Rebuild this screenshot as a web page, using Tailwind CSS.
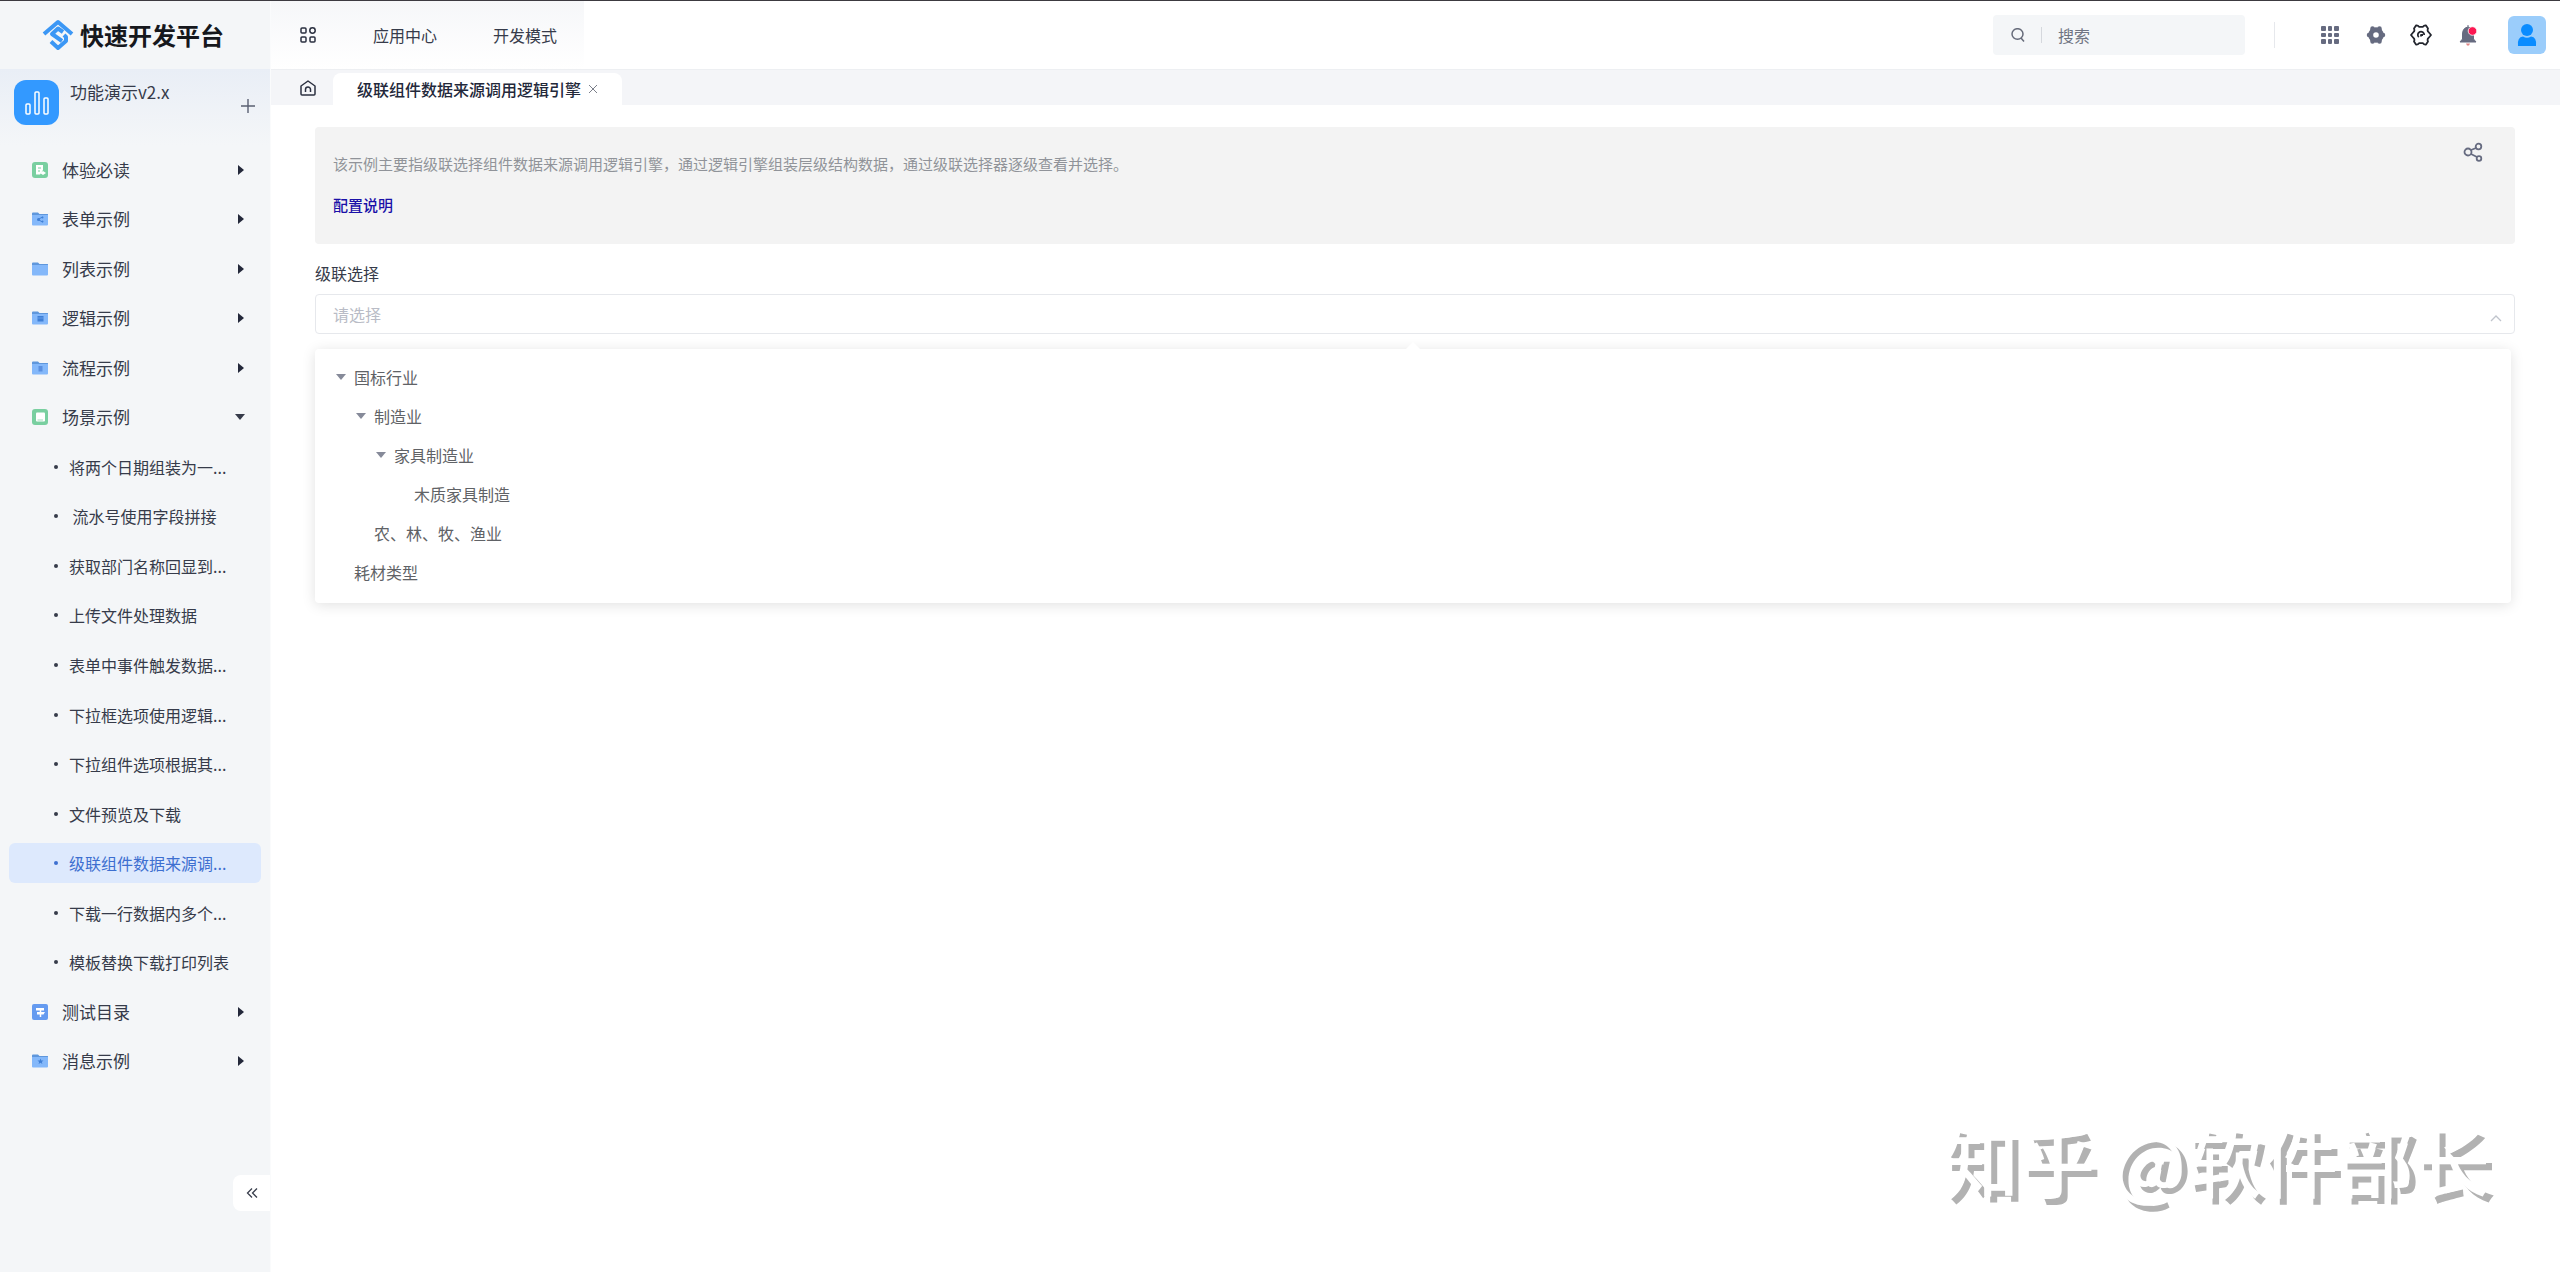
<!DOCTYPE html>
<html lang="zh-CN">

<head>
    <meta charset="UTF-8" />
    <meta name="viewport" content="width=device-width, initial-scale=1.0" />
    <title>快速开发平台</title>
    <script src="https://cdn.jsdelivr.net/npm/@tailwindcss/browser@4"></script>
</head>

<body class="min-h-screen flex flex-col bg-white border-t border-[#3c3a40] text-base text-[#363b4a] font-['Noto_Sans_CJK_SC',sans-serif]">

    <!-- Icônes réutilisées -->
    <svg class="hidden">
        <symbol id="folder" viewBox="0 0 16 14">
            <path d="M0 1.5Q0 .5 1 .5H6L7.5 2H16V4H0Z" fill="#5f97dc" />
            <path d="M0 3H15.5L16 2.5V12.5Q16 13.5 15 13.5H1Q0 13.5 0 12.5Z" fill="#84b8fa" />
        </symbol>
        <symbol id="right" viewBox="0 0 8 12"><path d="M1 1L7 6L1 11Z" fill="#23283a" /></symbol>
        <symbol id="down" viewBox="0 0 10 6"><path d="M0 0H10L5 6Z" fill="currentColor" /></symbol>
    </svg>

    <div class="flex flex-1">
        <aside class="w-[270px] shrink-0 flex flex-col bg-[#f4f6f8] relative">
            <div class="h-17 flex items-center pl-[42px] gap-[6px]">
                <svg class="w-8 h-8" viewBox="0 0 32 32" fill="none" stroke="#3b97f5" stroke-width="4" stroke-linejoin="round">
                    <path d="M2 15L16 3L30 15" />
                    <path d="M21 13L16 9.500L10 15L20 22" />
                    <path d="M22 16L24 18V22L16 29L9 22.500" />
                </svg>
                <span class="text-2xl leading-8 font-bold text-[#16181d] whitespace-nowrap">快速开发平台</span>
            </div>
            <div class="h-[76px] flex pt-[11px] pl-[14px] pr-[15px] bg-linear-to-b from-[#e9eef6] to-[#f4f6f8]">
                <div class="w-[45px] h-[45px] rounded-xl bg-[#3399ff] flex items-center justify-center">
                    <svg class="w-6 h-6" viewBox="0 0 24 24" fill="none" stroke="white" stroke-width="1.5">
                        <rect x="1" y="13" width="4" height="10" rx="1" />
                        <rect x="10" y="1" width="4" height="22" rx="1" />
                        <rect x="19" y="7" width="4" height="16" rx="1" />
                    </svg>
                </div>
                <span class="flex-1 ml-[11px] text-[17px] leading-6">功能演示v2.x</span>
                <button class="self-start mt-[19px]" aria-label="新增">
                    <svg class="w-[14px] h-[14px]" viewBox="0 0 14 14" stroke="#5a6072" stroke-width="1.4"><path d="M7 0V14M0 7H14" /></svg>
                </button>
            </div>

            <nav id="menu" class="h-[941px] grid auto-rows-fr items-center px-[9px]"></nav>

            <button class="absolute right-0 bottom-[61px] w-[37px] h-9 rounded-l-lg bg-white flex items-center justify-center" aria-label="收起">
                <svg class="w-3 h-3" viewBox="0 0 12 12" fill="none" stroke="#3a3f4d" stroke-width="1.3"><path d="M6 1.5L1.5 6L6 10.5M11 1.5L6.500 6L11 10.5" /></svg>
            </button>
        </aside>

        <div class="flex-1 flex flex-col border-l border-[#fafbfc]">
            <header class="h-17 flex items-center">
                <div class="h-full w-[313px] flex items-center pl-[29px] bg-linear-to-b from-[#f6f7f9] to-white">
                    <svg class="w-4 h-4" viewBox="0 0 16 16" fill="none" stroke="#2b3040" stroke-width="1.5">
                        <rect x="1" y="1" width="5" height="5" rx="1" />
                        <circle cx="12.500" cy="3.500" r="2.700" />
                        <rect x="1" y="10" width="5" height="5" rx="1" />
                        <rect x="10" y="10" width="5" height="5" rx="1" />
                    </svg>
                    <a href="#" class="ml-[57px]">应用中心</a>
                    <a href="#" class="ml-14">开发模式</a>
                </div>
                <div class="flex-1"></div>
                <label class="w-[252px] h-10 rounded bg-[#f4f6f8] flex items-center pl-[18px]">
                    <svg class="w-[14px] h-[14px]" viewBox="0 0 14 14" fill="none" stroke="#666b7a" stroke-width="1.5"><ellipse cx="6.500" cy="6" rx="5.500" ry="5.300" /><path d="M10 10L13 13.500" /></svg>
                    <span class="w-px h-4 ml-4 bg-[#d5d8dd]"></span>
                    <input type="text" placeholder="搜索" aria-label="搜索" class="w-40 ml-4 bg-transparent outline-none placeholder-[#6f7482]" />
                </label>
                <span class="w-px h-[26px] ml-[29px] bg-[#e6e8ec]"></span>
                <div class="flex items-center ml-[45px]">
                    <button aria-label="应用">
                        <svg class="w-5 h-5" viewBox="0 0 20 20" fill="#666b80">
                            <rect x="1" y="1" width="5" height="5" rx="1" /><rect x="8" y="1" width="4" height="5" rx="1" /><rect x="14" y="1" width="5" height="5" rx="1" />
                            <rect x="1" y="8" width="5" height="4" rx="1" /><rect x="8" y="8" width="4" height="4" rx="1" /><rect x="14" y="8" width="5" height="4" rx="1" />
                            <rect x="1" y="14" width="5" height="5" rx="1" /><rect x="8" y="14" width="4" height="5" rx="1" /><rect x="14" y="14" width="5" height="5" rx="1" />
                        </svg>
                    </button>
                    <button class="ml-[26px]" aria-label="设置">
                        <svg class="w-5 h-5" viewBox="0 0 20 20" fill="none" stroke="#666b80" stroke-linecap="round">
                            <circle cx="10" cy="10" r="5.300" stroke-width="5" />
                            <path d="M6.500 3.500V5M13.500 3.500V5M6.500 16.500V15M13.500 16.500V15M3 10H4M17 10H16" stroke-width="4.500" />
                        </svg>
                    </button>
                    <button class="ml-6" aria-label="系统">
                        <svg class="w-[22px] h-[22px]" viewBox="0 0 22 22" fill="none" stroke="#23262e" stroke-width="1.8" stroke-linejoin="round">
                            <path d="M6 1.500Q8 1.200 9 2.800H13Q14 1.200 16 1.500L18 4.500Q17 7 18.500 8L21 11L18.500 14Q17 15 18 17.500L16 20.500Q14 20.800 13 19.200H9Q8 20.800 6 20.500L4 17.500Q5 15 3.500 14L1 11L3.500 8Q5 7 4 4.500Z" />
                            <path d="M8.800 13.200A3.200 3.200 0 1 1 14.200 11M11 12.500V11H13" />
                        </svg>
                    </button>
                    <button class="ml-[27px]" aria-label="通知">
                        <svg class="w-5 h-[22px]" viewBox="0 0 20 22">
                            <path d="M9 1V3Q3.500 4 3.500 10V15L1 18H17L14.500 15V10Q14.500 4 9 3" fill="#666b80" stroke="#666b80" />
                            <path d="M7 19.500H11L10 21.500H8Z" fill="#e08585" />
                            <circle cx="13.500" cy="7" r="4.300" fill="#fb1852" stroke="white" stroke-width=".8" />
                        </svg>
                    </button>
                    <button class="ml-[29px] mr-[14px] w-[38px] h-[38px] rounded-md bg-[#9bcdfb] flex items-center justify-center" aria-label="用户">
                        <svg class="w-5 h-[22px]" viewBox="0 0 20 22" fill="#0a8cff"><circle cx="10" cy="6" r="6" /><path d="M1 22Q0 13 6 12.500Q10 15 14 12.500Q20 13 19 22Z" /></svg>
                    </button>
                </div>
            </header>

            <div class="h-9 bg-[#f4f5f8] border-t border-[#edeff2] flex items-end">
                <button class="self-center ml-[29px]" aria-label="首页">
                    <svg class="w-4 h-4" viewBox="0 0 16 16" fill="none" stroke="#2b3040" stroke-width="1.5" stroke-linejoin="round"><path d="M1 6L8 1L15 6V14Q15 15 14 15H2Q1 15 1 14Z" /><path d="M5.500 12V9.500A2.500 2.500 0 0 1 10.500 9.500V12" /></svg>
                </button>
                <div class="ml-[17px] h-8 w-[289px] pl-6 rounded-t-lg bg-white flex items-center gap-2">
                    <span class="font-medium leading-6 text-[#23283a]">级联组件数据来源调用逻辑引擎</span>
                    <button aria-label="关闭"><svg class="w-2 h-2" viewBox="0 0 8 8" stroke="#7b7f8a"><path d="M0 0L8 8M8 0L0 8" /></svg></button>
                </div>
            </div>

            <main class="pl-[44px] pr-[45px] pt-[22px]">
                <section class="h-[117px] rounded bg-[#f3f3f3] pl-[18px] pr-8 pt-[25px] flex justify-between items-start text-[15px] leading-6">
                    <div>
                        <p class="text-[#909399]">该示例主要指级联选择组件数据来源调用逻辑引擎，通过逻辑引擎组装层级结构数据，通过级联选择器逐级查看并选择。</p>
                        <a href="#" class="block mt-[17px] font-medium text-[#1a10a8]">配置说明</a>
                    </div>
                    <button class="-mt-[10px]" aria-label="分享">
                        <svg class="w-5 h-5" viewBox="0 0 20 20" fill="none" stroke="#666b80" stroke-width="1.800"><circle cx="5" cy="10" r="3.500" /><circle cx="15.500" cy="4.500" r="2.800" /><circle cx="16" cy="16.500" r="2.300" /><path d="M8 8L13 6M8 12L14 15" /></svg>
                    </button>
                </section>

                <label for="cascade" class="block mt-[17px] leading-6">级联选择</label>
                <div class="relative mt-[9px]">
                    <input id="cascade" type="text" placeholder="请选择" class="w-full h-10 px-[17px] border border-[#e6e8ec] rounded outline-none placeholder-[#b9bcc6]" />
                    <svg class="absolute right-[13px] top-5 w-3 h-2" viewBox="0 0 12 8" fill="none" stroke="#c0c4cc" stroke-width="1.300"><path d="M1 7L6 2L11 7" /></svg>
                </div>

                <div class="relative mt-[15px] mr-1 pt-2 pb-3 px-[21px] rounded bg-white shadow-[0_2px_14px_rgba(0,0,0,0.12)] text-[#606266]">
                    <span class="absolute left-1/2 -translate-x-1/2 -top-[5px] w-[10px] h-[10px] rotate-45 bg-white"></span>
                    <ul id="tree"></ul>
                </div>
            </main>

            <p class="mt-auto self-end mr-[70px] mb-[61px] text-[76px] leading-[104px] font-medium text-white [text-shadow:6px_6px_0_#b2b2b2]">知乎 @软件部长</p>
        </div>
    </div>

    <script>
        const menu = [
            { name: "体验必读", icon: "read" },
            { name: "表单示例", icon: "share" },
            { name: "列表示例", icon: "plain" },
            { name: "逻辑示例", icon: "table" },
            { name: "流程示例", icon: "flow" },
            {
                name: "场景示例", icon: "book",
                children: ["将两个日期组装为一...", "\u00a0流水号使用字段拼接", "获取部门名称回显到...", "上传文件处理数据", "表单中事件触发数据...", "下拉框选项使用逻辑...", "下拉组件选项根据其...", "文件预览及下载", "级联组件数据来源调...", "下载一行数据内多个...", "模板替换下载打印列表"]
            },
            { name: "测试目录", icon: "sign" },
            { name: "消息示例", icon: "star" }
        ];
        const active = "级联组件数据来源调...";

        const folder = '<use href="#folder" y="1" width="16" height="14" />';
        const icons = {
            read: '<rect width="16" height="16" rx="3" fill="#79cfa0" /><path d="M4 3H11V8L8 12.500H4Z" fill="white" /><path d="M8 11L11 9L14 11L11 13Z" fill="white" /><path d="M6 6H9M6 9H8" stroke="#79cfa0" />',
            share: folder + '<path d="M10.500 6L6 8.500L10.500 11" stroke="#3f7fd6" fill="none" /><circle cx="6.500" cy="8.500" r="1.500" fill="#3f7fd6" /><circle cx="10.500" cy="6.500" r="1" fill="#3f7fd6" /><circle cx="10.500" cy="10.500" r="1" fill="#3f7fd6" />',
            plain: folder,
            table: folder + '<rect x="5.500" y="6" width="6" height="5.500" fill="#3f7fd6" /><path d="M5.500 8H11.500" stroke="#84b8fa" stroke-width=".5" />',
            flow: folder + '<rect x="6.500" y="6" width="4" height="5.500" fill="#5a8fe0" />',
            book: '<rect width="16" height="16" rx="3" fill="#79cfa0" /><rect x="4" y="3.500" width="9" height="9" rx="1" fill="white" /><path d="M5.500 11H11" stroke="#79cfa0" stroke-width=".7" />',
            sign: '<rect width="16" height="16" rx="2" fill="#659bf0" /><path d="M4 4H12V6.500H4ZM5 8H13L11.500 10.500H5Z" fill="white" /><path d="M8.500 4V13" stroke="white" stroke-width="1.500" />',
            star: folder + '<path d="M8.500 5.500L9.300 7.500H11.500L9.800 8.900L10.400 11L8.500 9.800L6.600 11L7.200 8.900L5.500 7.500H7.700Z" fill="#3f7fd6" />'
        };

        let html = "";
        menu.forEach(item => {
            const arrow = item.children
                ? '<svg class="w-[10px] h-[6px] mr-4"><use href="#down" /></svg>'
                : '<svg class="w-2 h-3 mr-4"><use href="#right" /></svg>';
            html += `
                <a href="#" class="h-10 flex items-center pl-[23px]">
                    <svg class="w-4 h-4" viewBox="0 0 16 16">${icons[item.icon]}</svg>
                    <span class="flex-1 ml-[14px] text-[17px] leading-6">${item.name}</span>${arrow}
                </a>`;
            (item.children || []).forEach(child => {
                const color = child === active ? "bg-[#dde9fd] text-[#3d6fd0]" : "";
                html += `
                <a href="#" class="h-10 flex items-center pl-[45px] rounded-md ${color}">
                    <span class="w-1 h-1 rounded-full bg-current"></span>
                    <span class="ml-[11px] leading-6 whitespace-nowrap">${child}</span>
                </a>`;
            });
        });
        document.getElementById("menu").innerHTML = html;

        const tree = [
            { name: "国标行业", pad: "pl-0", open: true },
            { name: "制造业", pad: "pl-5", open: true },
            { name: "家具制造业", pad: "pl-10", open: true },
            { name: "木质家具制造", pad: "pl-15" },
            { name: "农、林、牧、渔业", pad: "pl-5" },
            { name: "耗材类型", pad: "pl-0" }
        ];
        document.getElementById("tree").innerHTML = tree.map(node => `
            <li class="h-[39px] flex items-center ${node.pad}">
                <svg class="w-[10px] h-[6px] mr-2 text-[#868a99]">${node.open ? '<use href="#down" />' : ""}</svg>
                <span class="leading-6">${node.name}</span>
            </li>`).join("");
    </script>
</body>

</html>
